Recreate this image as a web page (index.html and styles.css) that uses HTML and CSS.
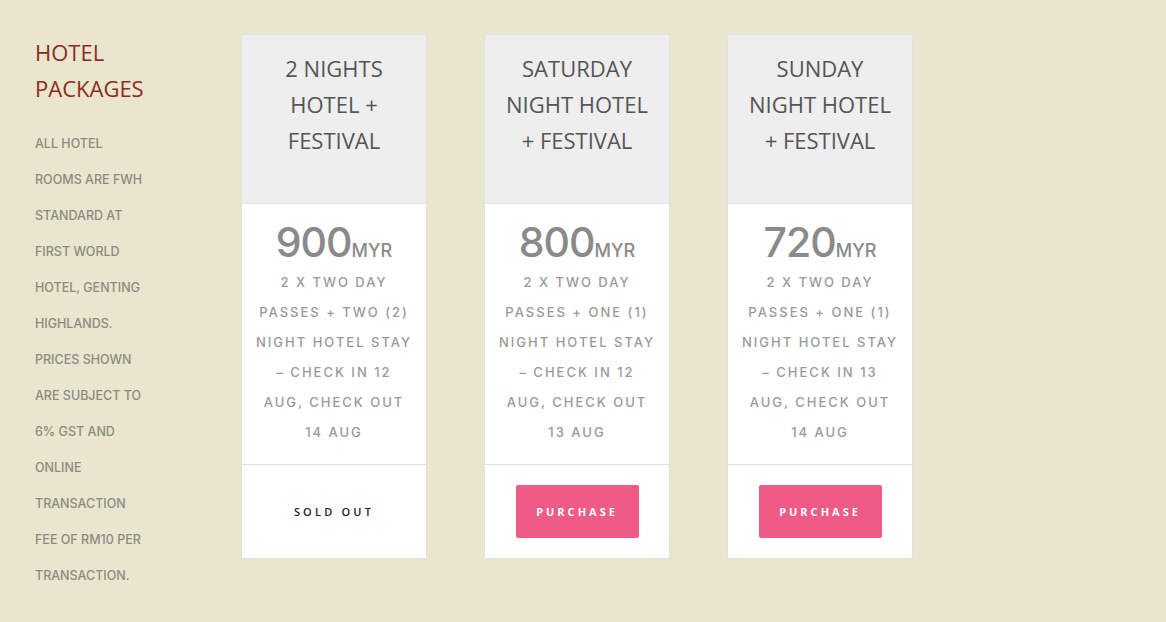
FILE: index.html
```html
<!DOCTYPE html>
<html>
<head>
<meta charset="utf-8">
<link rel="stylesheet" href="styles.css">
</head>
<body>
<div class="page">
  <aside class="side">
    <h2 class="side-title">HOTEL<br>PACKAGES</h2>
    <p class="side-text">ALL HOTEL<br>ROOMS ARE FWH<br>STANDARD AT<br>FIRST WORLD<br>HOTEL, GENTING<br>HIGHLANDS.<br>PRICES SHOWN<br>ARE SUBJECT TO<br>6% GST AND<br>ONLINE<br>TRANSACTION<br>FEE OF RM10 PER<br>TRANSACTION.</p>
  </aside>
  <div class="cards">
    <div class="card">
      <div class="card-head">2 NIGHTS<br>HOTEL +<br>FESTIVAL</div>
      <div class="card-body">
        <div class="price"><span class="amount">900</span><span class="cur">MYR</span></div>
        <div class="desc">2 X TWO DAY<br>PASSES + TWO (2)<br>NIGHT HOTEL STAY<br>– CHECK IN 12<br>AUG, CHECK OUT<br>14 AUG</div>
      </div>
      <div class="card-foot"><span class="sold">SOLD OUT</span></div>
    </div>
    <div class="card">
      <div class="card-head">SATURDAY<br>NIGHT HOTEL<br>+ FESTIVAL</div>
      <div class="card-body">
        <div class="price"><span class="amount">800</span><span class="cur">MYR</span></div>
        <div class="desc">2 X TWO DAY<br>PASSES + ONE (1)<br>NIGHT HOTEL STAY<br>– CHECK IN 12<br>AUG, CHECK OUT<br>13 AUG</div>
      </div>
      <div class="card-foot"><a class="btn" href="#">PURCHASE</a></div>
    </div>
    <div class="card">
      <div class="card-head">SUNDAY<br>NIGHT HOTEL<br>+ FESTIVAL</div>
      <div class="card-body">
        <div class="price"><span class="amount">720</span><span class="cur">MYR</span></div>
        <div class="desc">2 X TWO DAY<br>PASSES + ONE (1)<br>NIGHT HOTEL STAY<br>– CHECK IN 13<br>AUG, CHECK OUT<br>14 AUG</div>
      </div>
      <div class="card-foot"><a class="btn" href="#">PURCHASE</a></div>
    </div>
  </div>
</div>
</body>
</html>
```
FILE: styles.css
```css
html, body {
  margin: 0;
  padding: 0;
  background: #e9e5ce;
  height: 100%;
}
body {
  font-family: "Open Sans", "Liberation Sans", sans-serif;
}
.page {
  display: flex;
  padding-left: 35px;
}
.side {
  width: 206px;
  flex: none;
  padding-top: 34px;
}
.side-title {
  margin: 0;
  font-weight: 400;
  font-size: 22px;
  line-height: 36px;
  color: #8e2b21;
}
.side-text {
  margin: 20px 0 0;
  font-family: "Inter", "DejaVu Sans", sans-serif;
  font-weight: 500;
  font-size: 12.5px;
  line-height: 36px;
  color: #8c8a82;
  letter-spacing: 0;
}
.cards {
  display: flex;
  gap: 57px;
  padding-top: 34px;
  align-items: flex-start;
}
.card {
  width: 186px;
  box-sizing: border-box;
  border: 1px solid #e2e1dc;
  background: #fff;
  text-align: center;
}
.card-head {
  background: #eeeeee;
  height: 169px;
  box-sizing: border-box;
  padding-top: 15px;
  font-size: 22px;
  line-height: 36px;
  color: #555;
  border-bottom: 1px solid #e6e6e6;
}
.card-body {
  padding: 13px 0 17px;
  border-bottom: 1px solid #e0e0e0;
}
.price {
  line-height: 50px;
  height: 50px;
  color: #8a8a8a;
  font-family: "Inter", "DejaVu Sans", sans-serif;
}
.amount {
  font-size: 41px;
  font-weight: 500;
  letter-spacing: -1px;
}
.cur {
  font-size: 18px;
  font-weight: 500;
}
.desc {
  font-family: "Inter", "DejaVu Sans", sans-serif;
  font-weight: 500;
  font-size: 13px;
  line-height: 30px;
  letter-spacing: 2px;
  color: #999;
}
.card-foot {
  height: 93px;
  display: flex;
  align-items: center;
  justify-content: center;
}
.sold {
  font-size: 11px;
  font-weight: 600;
  letter-spacing: 3.2px;
  color: #222;
}
.btn {
  display: flex;
  align-items: center;
  justify-content: center;
  width: 123px;
  height: 53px;
  background: #f05a87;
  border-radius: 2px;
  color: #fff;
  text-decoration: none;
  font-size: 11px;
  font-weight: 700;
  letter-spacing: 3px;
}
```
